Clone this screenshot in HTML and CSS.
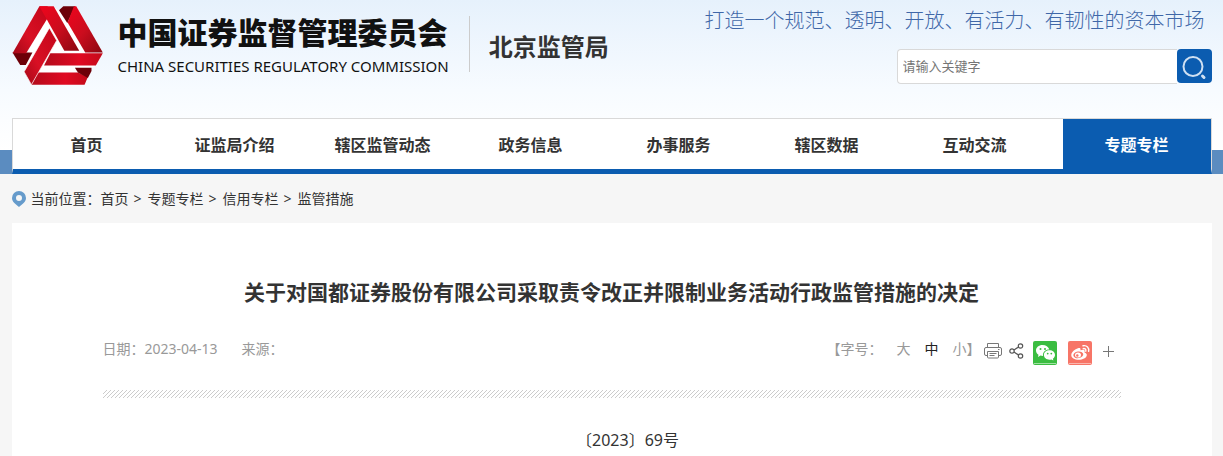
FILE: index.html
```html
<!DOCTYPE html>
<html lang="zh-CN">
<head>
<meta charset="utf-8">
<meta name="viewport" content="width=device-width, initial-scale=1">
<title>北京监管局</title>
<link rel="stylesheet" href="styles.css">
</head>
<body>
<header class="header">
  <div class="wrap masthead">
    <a class="brand" href="#">
      <svg class="brand-mark" viewBox="36 17 273 238" aria-hidden="true">
        <defs>
          <linearGradient id="redA" x1="1" y1="0" x2="0" y2="1"><stop offset="0" stop-color="#c3061a"/><stop offset=".6" stop-color="#d91024"/><stop offset="1" stop-color="#a50818"/></linearGradient>
          <linearGradient id="redB" x1="0" y1="0" x2="1" y2="1"><stop offset="0" stop-color="#f0041c"/><stop offset=".5" stop-color="#cb0d1e"/><stop offset="1" stop-color="#8a0610"/></linearGradient>
          <linearGradient id="redC" x1="0" y1="0" x2="1" y2="0"><stop offset="0" stop-color="#b30b1b"/><stop offset=".6" stop-color="#e00a22"/><stop offset="1" stop-color="#c40a1a"/></linearGradient>
        </defs>
        <path fill="#fff" d="M158 18l20 14 86 125 22 42-60 18H94l-20-20 6-40 60-102z"/>
        <path fill="#6d0008" d="M37 157h60l-20 38H60z"/>
        <path fill="url(#redA)" d="M118 18h25l-2 38-63 103H37z"/>
        <path fill="url(#redB)" d="M118 18h43l77 134h-45z"/>
        <path fill="#6d0008" d="M190 18h36l-24 50-25-38z"/>
        <path fill="url(#redB)" d="M222 18h7l80 139h-53L203 67z"/>
        <path fill="url(#redC)" d="M151 159h158l-21 37H132z"/>
        <path fill="url(#redC)" d="M114 217h120l30 14-10 23H94z"/>
        <path fill="#6d0008" d="M225 203h50v10l-11 21-30-17z"/>
        <path fill="url(#redA)" stroke="#fff" stroke-width="2" d="M148 83l22 38-76 133-22-39z"/>
      </svg>
      <span class="brand-text">
        <span class="brand-name">中国证券监督管理委员会</span>
        <span class="brand-en">CHINA SECURITIES REGULATORY COMMISSION</span>
      </span>
    </a>
    <span class="bureau">北京监管局</span>
    <div class="masthead-side">
      <p class="slogan">打造一个规范、透明、开放、有活力、有韧性的资本市场</p>
      <form class="search">
        <input class="search-input" type="text" placeholder="请输入关键字" aria-label="请输入关键字">
        <button class="search-button" type="button" aria-label="搜索">
          <svg width="35" height="34" viewBox="0 0 35 34" fill="none" stroke="#cfe0f2" aria-hidden="true"><circle cx="16" cy="17.500" r="9.500" stroke-width="2"/><path d="M25.500 27l1.500 1.500" stroke-width="3" stroke-linecap="round"/></svg>
        </button>
      </form>
    </div>
  </div>
  <div class="nav-band">
    <nav class="wrap nav">
      <a class="nav-item" href="#">首页</a>
      <a class="nav-item" href="#">证监局介绍</a>
      <a class="nav-item" href="#">辖区监管动态</a>
      <a class="nav-item" href="#">政务信息</a>
      <a class="nav-item" href="#">办事服务</a>
      <a class="nav-item" href="#">辖区数据</a>
      <a class="nav-item" href="#">互动交流</a>
      <a class="nav-item nav-item-active" href="#">专题专栏</a>
    </nav>
  </div>
</header>
<main class="wrap">
  <div class="crumbs">
    <svg class="crumb-pin" width="14" height="16" viewBox="0 0 14 16" aria-hidden="true"><path fill="#669bcb" fill-rule="evenodd" d="M7 0a7 7 0 0 1 7 7c0 4-4 6.500-7 9-3-2.500-7-5-7-9a7 7 0 0 1 7-7zm0 4a3 3 0 1 0 0 6 3 3 0 0 0 0-6z"/></svg>
    <span>当前位置：</span>
    <a href="#">首页</a><span class="crumb-sep">&gt;</span>
    <a href="#">专题专栏</a><span class="crumb-sep">&gt;</span>
    <a href="#">信用专栏</a><span class="crumb-sep">&gt;</span>
    <a href="#">监管措施</a>
  </div>
  <article class="card">
    <h1 class="title">关于对国都证券股份有限公司采取责令改正并限制业务活动行政监管措施的决定</h1>
    <div class="meta">
      <span class="meta-date">日期：2023-04-13</span>
      <span>来源：</span>
      <div class="tools">
        <span>【字号：</span>
        <button class="size" type="button">大</button>
        <button class="size size-current" type="button">中</button>
        <button class="size" type="button">小</button>
        <span>】</span>
        <button class="tool" type="button" aria-label="打印">
          <svg width="18" height="16" viewBox="0 0 18 16" fill="none" stroke="#777" aria-hidden="true"><path d="M3.500 4V.5h11V4M3.500 12.500H2a1.500 1.500 0 0 1-1.500-1.500V6A1.500 1.500 0 0 1 2 4.500h14A1.500 1.500 0 0 1 17.500 6v5a1.500 1.500 0 0 1-1.500 1.500h-1.500M3.500 8.500h11V14a1 1 0 0 1-1 1h-9a1 1 0 0 1-1-1zM5.500 10.500h7M5.500 12.500h5M14 6.500h1.500"/></svg>
        </button>
        <button class="tool tool-share" type="button" aria-label="分享">
          <svg width="15" height="16" viewBox="0 0 15 16" fill="none" stroke="#555" stroke-width="1.200" aria-hidden="true"><circle cx="3" cy="8" r="2.200"/><circle cx="11.500" cy="3" r="2.200"/><circle cx="11.500" cy="13" r="2.200"/><path d="M5 7l4.500-3M5 9l4.500 3"/></svg>
        </button>
        <button class="tool tool-wechat" type="button" aria-label="微信">
          <svg width="24" height="24" viewBox="0 0 24 24" aria-hidden="true"><rect width="24" height="24" rx="2" fill="#3bbd41"/><path d="M1 22.500h22" stroke="#9fe0a2"/><path fill="#fff" d="M9.500 4C5.800 4 3 6.400 3 9.500c0 1.800 1 3.300 2.500 4.300L5 16l2.500-1.400c.8.200 1.600.3 2.500.3-.5-3.700 2.600-6.400 6.300-6.300C15.600 5.800 12.800 4 9.500 4z"/><path fill="#fff" d="M16.500 9.300c-3.100 0-5.600 2-5.600 4.700s2.500 4.700 5.600 4.700c.7 0 1.300-.1 1.900-.3l2 1.200-.5-1.900c1.300-.9 2.100-2.200 2.100-3.700 0-2.700-2.400-4.700-5.500-4.700z"/><g fill="#3bbd41"><circle cx="7.500" cy="8" r="1"/><circle cx="12" cy="8" r="1"/><circle cx="14.700" cy="12.600" r=".9"/><circle cx="18.300" cy="12.600" r=".9"/></g></svg>
        </button>
        <button class="tool tool-weibo" type="button" aria-label="微博">
          <svg width="24" height="24" viewBox="0 0 24 24" aria-hidden="true"><rect width="24" height="24" rx="2" fill="#f77567"/><path d="M1 22.500h22" stroke="#fbb8b0"/><path fill="#fff" d="M10 7.200c1.300-.5 2.600-.3 2.500 1.200 0 .5-.2 1 .2.900 1.700-.7 4-.9 4 1 0 .8-.5 1.100.2 1.400 1 .4 2.100 1.100 1.900 2.600-.4 2.800-4.300 4.500-8 4.500-4 0-7.800-1.900-7.500-5.100C3.500 11 7 8 10 7.200z"/><ellipse cx="10.300" cy="13.800" rx="5" ry="3.300" transform="rotate(-9 10.300 13.800)" fill="#f77567"/><ellipse cx="10" cy="14" rx="3" ry="2.500" fill="#fff"/><circle cx="9.300" cy="14.500" r="1.200" fill="#f77567"/><path d="M15.200 7.600c1.800-.4 3 .9 2.600 2.600M15 4.800c3.800-.8 6.500 2 5.600 5.600" fill="none" stroke="#fff" stroke-width="1.400" stroke-linecap="round"/></svg>
        </button>
        <button class="tool tool-more" type="button" aria-label="更多">
          <svg width="11" height="11" viewBox="0 0 11 11" stroke="#777" aria-hidden="true"><path d="M5.500 0v11M0 5.500h11"/></svg>
        </button>
      </div>
    </div>
    <div class="rule">
      <svg class="rule-hatch" width="100%" height="8" aria-hidden="true"><defs><pattern id="hatch" width="4" height="8" patternUnits="userSpaceOnUse"><path d="M-8 8L0 0M-4 8L4 0M0 8L8 0" stroke="#ccc" stroke-width="1"/></pattern></defs><rect width="100%" height="8" fill="url(#hatch)"/></svg>
    </div>
    <p class="doc-number">〔2023〕69号</p>
  </article>
</main>
</body>
</html>
```
FILE: styles.css
```css
* {
  box-sizing: border-box;
}

body {
  margin: 0;
  background: #f6f6f6;
  color: #333;
  font: 14px/20px "Noto Sans", "Noto Sans CJK SC", sans-serif;
  text-spacing-trim: space-all;
}

a {
  color: inherit;
  text-decoration: none;
}

button {
  padding: 0;
  border: 0;
  background: none;
  color: inherit;
  font: inherit;
  cursor: pointer;
}

svg {
  display: block;
}

.wrap {
  max-width: 1200px;
  margin: 0 auto;
}

.header {
  background: linear-gradient(#e6f1fc, #f7fbff 90px, #fff 150px);
}

.masthead {
  display: flex;
  align-items: flex-start;
  height: 118px;
}

.brand {
  display: flex;
  gap: 15px;
  padding-top: 6px;
}

.brand-mark {
  width: 91px;
  height: 79px;
}

.brand-text {
  display: flex;
  flex-direction: column;
  padding-top: 5px;
  color: #111;
  white-space: nowrap;
}

.brand-name {
  font: 900 30px/40px "Noto Sans CJK SC", sans-serif;
}

.brand-en {
  font: 15px/30px "Noto Sans", sans-serif;
}

.bureau {
  height: 56px;
  margin: 16px 0 0 20px;
  padding-left: 19px;
  border-left: 1px solid #ccc;
  font: bold 24px/60px "Noto Sans CJK SC", sans-serif;
  white-space: nowrap;
}

.masthead-side {
  display: flex;
  flex-direction: column;
  align-items: flex-end;
  gap: 14px;
  margin-left: auto;
  padding-top: 5px;
}

.slogan {
  margin: 0;
  padding-right: 7px;
  color: #3f67a8;
  font: 300 20px/30px "KaiTi", "Noto Sans CJK SC", sans-serif;
  white-space: nowrap;
}

.search {
  display: flex;
  width: 315px;
}

.search-input {
  flex: 1;
  min-width: 0;
  height: 35px;
  padding: 0 5px 2px;
  border: 1px solid #d9d9d9;
  border-right: 0;
  border-radius: 4px 0 0 4px;
  background: #fff;
  font: 13px/20px "Noto Sans CJK SC", sans-serif;
}

.search-input::placeholder {
  color: #757575;
}

.search-button {
  width: 35px;
  height: 34px;
  border-radius: 4px;
  background: #0b5cb0;
}

.nav-band {
  background: linear-gradient(transparent 32px, #5b8cc0 32px);
}

.nav {
  display: flex;
  border: 1px solid #d9d9d9;
  border-bottom: 5px solid #0b5cb0;
  background: #fff;
}

.nav-item {
  flex: 1;
  font: bold 16px/50px "Noto Sans CJK SC", sans-serif;
  text-align: center;
  white-space: nowrap;
}

.nav-item-active {
  margin-left: 14px;
  background: #0b5cb0;
  color: #fff;
}

.crumbs {
  display: flex;
  align-items: center;
  height: 49px;
}

.crumb-pin {
  margin-right: 5px;
}

.crumb-sep {
  padding: 0 6px 0 5px;
}

.card {
  padding: 53px 91px 24px;
  background: #fff;
}

.title {
  margin: 0;
  font: bold 21px/30px "Noto Sans CJK SC", sans-serif;
  text-align: center;
}

.meta {
  display: flex;
  align-items: center;
  gap: 24px;
  height: 74px;
  margin-top: 6px;
  color: #999;
}

.tools {
  display: flex;
  align-items: center;
  margin-left: auto;
  padding-right: 7px;
}

.size {
  padding-left: 14px;
}

.size-current {
  color: #222;
}

.tool {
  margin: 3px 0 0 3px;
}

.tool-share {
  margin-left: 7px;
}

.tool-wechat {
  margin: 8px 0 0 9px;
}

.tool-weibo {
  margin: 8px 0 0 11px;
}

.tool-more {
  margin: 5px 0 0 11px;
}

.rule {
  padding-top: 4px;
}

.doc-number {
  margin: 32px 0 0;
  font-size: 16px;
  text-align: center;
  text-indent: 32px;
}
```
